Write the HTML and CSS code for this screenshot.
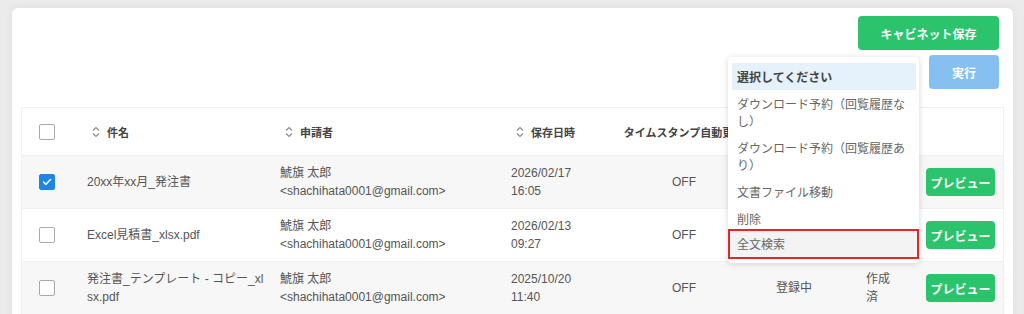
FILE: index.html
```html
<!DOCTYPE html>
<html lang="ja">
<head>
<meta charset="utf-8">
<title>キャビネット</title>
<link rel="stylesheet" href="styles.css">
</head>
<body>
<div class="card">
  <div class="actions">
    <button class="btn btn-green">キャビネット保存</button>
    <button class="btn btn-blue">実行</button>
  </div>

  <div class="table">
    <div class="row head">
      <div class="c c-check"><span class="cb"></span></div>
      <div class="c"><svg class="sort" width="8" height="12" viewBox="0 0 8 12"><path d="M1 4.5 L4 1.5 L7 4.5 M1 7.5 L4 10.5 L7 7.5"/></svg>件名</div>
      <div class="c"><svg class="sort" width="8" height="12" viewBox="0 0 8 12"><path d="M1 4.5 L4 1.5 L7 4.5 M1 7.5 L4 10.5 L7 7.5"/></svg>申請者</div>
      <div class="c"><svg class="sort" width="8" height="12" viewBox="0 0 8 12"><path d="M1 4.5 L4 1.5 L7 4.5 M1 7.5 L4 10.5 L7 7.5"/></svg>保存日時</div>
      <div class="c center">タイムスタンプ自動更新</div>
      <div class="c"></div>
      <div class="c"></div>
      <div class="c"></div>
    </div>

    <div class="row odd">
      <div class="c c-check"><span class="cb checked"><svg width="10" height="8" viewBox="0 0 10 8"><path d="M1.5 4 L4 6.3 L8.5 1.5"/></svg></span></div>
      <div class="c c-title">20xx年xx月_発注書</div>
      <div class="c">鯱旗 太郎<br>&lt;shachihata0001@gmail.com&gt;</div>
      <div class="c">2026/02/17<br>16:05</div>
      <div class="c center">OFF</div>
      <div class="c">登録中</div>
      <div class="c c-state">作成済</div>
      <div class="c"><button class="btn-preview">プレビュー</button></div>
    </div>

    <div class="row">
      <div class="c c-check"><span class="cb"></span></div>
      <div class="c c-title">Excel見積書_xlsx.pdf</div>
      <div class="c">鯱旗 太郎<br>&lt;shachihata0001@gmail.com&gt;</div>
      <div class="c">2026/02/13<br>09:27</div>
      <div class="c center">OFF</div>
      <div class="c">登録中</div>
      <div class="c c-state">作成済</div>
      <div class="c"><button class="btn-preview">プレビュー</button></div>
    </div>

    <div class="row odd">
      <div class="c c-check"><span class="cb"></span></div>
      <div class="c c-title">発注書_テンプレート - コピー_xlsx.pdf</div>
      <div class="c">鯱旗 太郎<br>&lt;shachihata0001@gmail.com&gt;</div>
      <div class="c">2025/10/20<br>11:40</div>
      <div class="c center">OFF</div>
      <div class="c">登録中</div>
      <div class="c c-state">作成済</div>
      <div class="c"><button class="btn-preview">プレビュー</button></div>
    </div>
  </div>

  <ul class="dropdown">
    <li class="opt selected">選択してください</li>
    <li class="opt">ダウンロード予約（回覧履歴なし）</li>
    <li class="opt">ダウンロード予約（回覧履歴あり）</li>
    <li class="opt">文書ファイル移動</li>
    <li class="opt">削除</li>
    <li class="opt marked">全文検索</li>
  </ul>
</div>
</body>
</html>
```

FILE: styles.css
```css
* { box-sizing: border-box; }

html, body {
  margin: 0;
  padding: 0;
  height: 314px;
  overflow: hidden;
  background: #ebebeb;
  font-family: "Liberation Sans", "Noto Sans CJK JP", sans-serif;
}

.card {
  position: relative;
  margin: 8px 11px 0 12px;
  min-height: 330px;
  padding: 8px 9px;
  background: #fff;
  border-radius: 6px;
  box-shadow: 0 0 8px rgba(0, 0, 0, 0.06);
}

.actions {
  display: flex;
  flex-direction: column;
  align-items: flex-end;
  gap: 5px;
  padding-right: 5px;
}

.btn {
  height: 34px;
  border: none;
  border-radius: 4px;
  color: #fff;
  font-family: "Noto Sans CJK JP", sans-serif;
  font-size: 12px;
  font-weight: 700;
  padding: 0;
}

.btn-green { width: 141px; background: #2bc46d; }
.btn-blue { width: 70px; background: #86c0f0; }

.table {
  margin-top: 18px;
  border: 1px solid #f1f1f1;
  border-bottom: none;
}

.row {
  display: grid;
  grid-template-columns: 53px 193px 231px 105px 160px 90px 60px 90px;
  align-items: center;
  border-bottom: 1px solid #f1f1f1;
  color: #555;
  font-size: 12px;
  line-height: 18px;
}

.row.odd { background: #f7f7f7; }

.c {
  padding: 8px 12px;
  min-width: 0;
  word-break: break-all;
}

.c-title { padding-right: 0; }
.c-state { padding-right: 18px; }

.c-check { padding-left: 17px; padding-right: 0; display: flex; }

.center { text-align: center; }

.head {
  height: 48px;
  font-size: 11px;
  font-weight: 700;
  color: #444;
  font-family: "Noto Sans CJK JP", sans-serif;
}

.head .c { padding-left: 17px; display: flex; align-items: center; white-space: nowrap; word-break: normal; }
.head .c.center { justify-content: center; padding-left: 12px; }
.head .c-check { padding-left: 17px; }

.sort {
  margin-right: 7px;
  flex: none;
}
.sort path { fill: none; stroke: #8a8a8a; stroke-width: 1.2; }

.cb {
  width: 16px;
  height: 16px;
  border: 1.5px solid #aaa;
  border-radius: 2px;
  background: #fff;
  display: flex;
  align-items: center;
  justify-content: center;
}
.cb.checked {
  background: #1d85e6;
  border-color: #1d85e6;
}
.cb svg path { fill: none; stroke: #fff; stroke-width: 1.6; stroke-linecap: round; stroke-linejoin: round; }

.btn-preview {
  width: 69px;
  height: 28px;
  border: none;
  border-radius: 4px;
  background: #2bc46d;
  color: #fff;
  font-family: "Noto Sans CJK JP", sans-serif;
  font-size: 12px;
  font-weight: 700;
  padding: 0;
}

.dropdown {
  position: absolute;
  left: 716px;
  top: 49px;
  width: 191px;
  margin: 0;
  padding: 6px 3px 4px 4px;
  list-style: none;
  background: #fff;
  border-radius: 4px;
  box-shadow: 0 1px 6px rgba(0, 0, 0, 0.16);
  font-family: "Noto Sans CJK JP", sans-serif;
  font-size: 12px;
  line-height: 17px;
  color: #666;
}

.opt {
  padding: 5px 5px;
}

.opt.selected {
  background: #e5f1fb;
  color: #444;
  font-weight: 700;
}

.opt.marked {
  margin: -3px -3px 0 -4px;
  padding: 4px 5px 5px 7px;
  height: 30px;
  border: 2px solid #e3262a;
  background: #f3f3f3;
}
```
